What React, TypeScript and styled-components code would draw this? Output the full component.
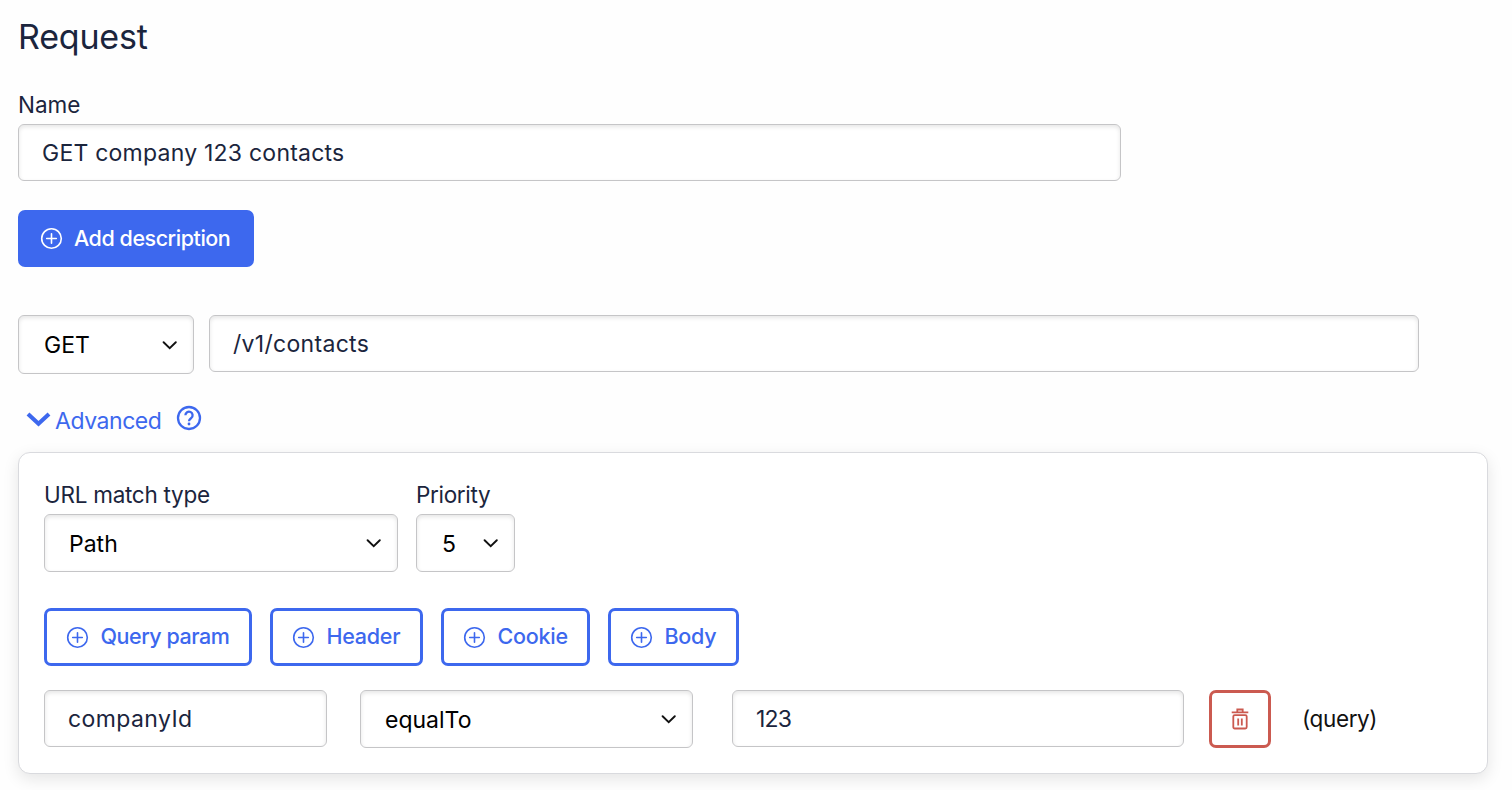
import React from 'react';
import styled, { createGlobalStyle } from 'styled-components';

const GlobalStyle = createGlobalStyle`
  * { box-sizing: border-box; }
  body {
    margin: 0;
    background: #fefefe;
    color: #1b253d;
    font-family: Inter, 'Liberation Sans', sans-serif;
    overflow: hidden;
  }
`;

const ink = '#1b253d';
const blue = '#3d68ee';
const red = '#cb5a50';

const Page = styled.main`
  display: flex;
  flex-direction: column;
  align-items: flex-start;
  width: 1512px;
  height: 790px;
  padding: 17px 0 0 18px;
`;

const Text = styled.span<{ $spacing?: number }>`
  display: block;
  white-space: nowrap;
  letter-spacing: ${(p) => p.$spacing ?? 0}px;
`;

const Title = styled.h1`
  margin: 0 0 33px;
  font-size: 34px;
  line-height: 40px;
  font-weight: 400;
  letter-spacing: -0.2px;
`;

const Label = styled.label<{ $spacing?: number }>`
  display: block;
  margin-bottom: 4px;
  font-size: 22.5px;
  line-height: 30px;
  white-space: nowrap;
  letter-spacing: ${(p) => p.$spacing ?? 0}px;
`;

const Field = styled.div<{ $width: number }>`
  display: flex;
  align-items: center;
  width: ${(p) => p.$width}px;
  height: 57px;
  padding: 0 23px;
  border: 1px solid #c5c5c7;
  border-radius: 6px;
  background: #fff;
  box-shadow: inset 0 2px 4px rgba(0, 0, 0, 0.1);
  color: ${ink};
  font-size: 23px;
  line-height: 30px;
`;

const SelectBox = styled(Field)<{ $height?: number; $indent?: number }>`
  justify-content: space-between;
  height: ${(p) => p.$height ?? 58}px;
  padding: 0 16px 0 ${(p) => p.$indent ?? 24}px;
  color: #000;
`;

const SelectValue = styled(Text)<{ $drop?: boolean }>`
  padding-top: ${(p) => (p.$drop ? 2 : 0)}px;
`;

const Button = styled.button<{ $width: number; $primary?: boolean }>`
  display: flex;
  align-items: center;
  gap: ${(p) => (p.$primary ? 11 : 12)}px;
  width: ${(p) => p.$width}px;
  height: ${(p) => (p.$primary ? 57 : 58)}px;
  padding: 0 0 0 ${(p) => (p.$primary ? 19 : 18.5)}px;
  border: 3px solid ${blue};
  border-radius: 7px;
  background: ${(p) => (p.$primary ? blue : '#fff')};
  color: ${(p) => (p.$primary ? '#fff' : blue)};
  font: 500 21.5px/28px Inter, 'Liberation Sans', sans-serif;
`;

const ButtonText = styled(Text)`
  padding-bottom: 2px;
`;

const DeleteButton = styled(Button)`
  justify-content: center;
  padding: 0;
  border-color: ${red};
  color: ${red};
`;

const AddRow = styled.div`
  margin: 29px 0 48px;
`;

const UrlRow = styled.div`
  display: flex;
  align-items: flex-start;
  gap: 15px;
`;

const AdvancedToggle = styled.div`
  display: flex;
  align-items: center;
  height: 30px;
  margin: 31px 0 17px 8px;
  color: ${blue};
  font-size: 23px;
  line-height: 30px;
`;

const AdvancedLabel = styled(Text)`
  width: 105px;
  margin: 1px 16px 0 4px;
`;

const HelpIcon = styled.svg`
  margin-top: -4px;
`;

const Panel = styled.section`
  display: flex;
  flex-direction: column;
  width: 1470px;
  height: 322px;
  padding: 27px 25px 0;
  border: 1px solid #d9dade;
  border-radius: 12px;
  background: #fff;
  box-shadow: 0 5px 16px rgba(0, 0, 0, 0.1);
`;

const MatchRow = styled.div`
  display: flex;
  gap: 18px;
`;

const ButtonRow = styled.div`
  display: flex;
  gap: 18px;
  margin: 36px 0 24px;
`;

const ConditionRow = styled.div`
  display: grid;
  grid-template-columns: 316px 372px 477px 93px auto;
  justify-content: start;
  align-items: start;
`;

const Kind = styled(Text)`
  color: #111;
  font-size: 22.5px;
  line-height: 57px;
`;

const PlusCircle = () => (
  <svg width="23" height="23" viewBox="0 0 23 23" fill="none" stroke="currentColor" strokeWidth="1.6">
    <circle cx="11.5" cy="11.5" r="9.8" />
    <path d="M11.5 6.7v9.6M6.7 11.5h9.6" strokeLinecap="round" />
  </svg>
);

const Chevron = () => (
  <svg width="15" height="10" viewBox="0 0 15 10" fill="none" stroke="#111" strokeWidth="1.9">
    <path d="M1.6 2.2l6.1 5.9 6.1-5.9" strokeLinecap="round" />
  </svg>
);

const BoldChevron = () => (
  <svg width="25" height="16" viewBox="0 0 25 16" fill="none" stroke="currentColor" strokeWidth="4.1">
    <path d="M2 1.9l10.5 9.8L23 1.9" />
  </svg>
);

const Trash = () => (
  <svg width="18" height="22" viewBox="0 0 18 22" fill="none" stroke="currentColor" strokeWidth="1.8">
    <path d="M.7 4.3h16.6M6.3 4.2V1.5h5.4v2.7" />
    <rect x="2.3" y="7.1" width="13.4" height="13.4" rx="1.4" />
    <path d="M7.2 10.5v7M10.8 10.5v7" />
  </svg>
);

const AddButton = ({ label, width, spacing, primary }: { label: string; width: number; spacing: number; primary?: boolean }) => (
  <Button $width={width} $primary={primary}>
    <PlusCircle />
    <ButtonText $spacing={spacing}>{label}</ButtonText>
  </Button>
);

type SelectProps = { value: string; width: number; height?: number; indent?: number; drop?: boolean };

const Select = ({ value, width, height, indent, drop }: SelectProps) => (
  <SelectBox $width={width} $height={height} $indent={indent}>
    <SelectValue $drop={drop}>{value}</SelectValue>
    <Chevron />
  </SelectBox>
);

export default function App() {
  return (
    <>
      <GlobalStyle />
      <Page>
        <Title>Request</Title>
        <Label>Name</Label>
        <Field $width={1103}><Text $spacing={0.23}>GET company 123 contacts</Text></Field>
        <AddRow>
          <AddButton primary label="Add description" width={236} spacing={-0.46} />
        </AddRow>
        <UrlRow>
          <Select value="GET" width={176} height={59} indent={25} />
          <Field $width={1210}><Text $spacing={0.3}>/v1/contacts</Text></Field>
        </UrlRow>
        <AdvancedToggle>
          <BoldChevron />
          <AdvancedLabel $spacing={-0.45}>Advanced</AdvancedLabel>
          <HelpIcon width="26" height="26" viewBox="0 0 26 26" fill="none" stroke="currentColor" strokeWidth="2.3">
            <circle cx="13" cy="13" r="11" />
            <path d="M9.4 10.3a3.6 3.6 0 1 1 5.8 2.8c-1.3 1-2.2 1.6-2.2 3.1" />
            <circle cx="13" cy="19" r="1.4" fill="currentColor" stroke="none" />
          </HelpIcon>
        </AdvancedToggle>
        <Panel>
          <MatchRow>
            <div>
              <Label $spacing={-0.27}>URL match type</Label>
              <Select value="Path" width={354} drop />
            </div>
            <div>
              <Label $spacing={-0.33}>Priority</Label>
              <Select value="5" width={99} indent={25} drop />
            </div>
          </MatchRow>
          <ButtonRow>
            <AddButton label="Query param" width={208} spacing={-0.47} />
            <AddButton label="Header" width={153} spacing={-0.25} />
            <AddButton label="Cookie" width={149} spacing={-0.25} />
            <AddButton label="Body" width={131} spacing={-0.3} />
          </ButtonRow>
          <ConditionRow>
            <Field $width={283}><Text $spacing={0.4}>companyId</Text></Field>
            <Select value="equalTo" width={333} drop />
            <Field $width={452}><Text $spacing={-0.8}>123</Text></Field>
            <DeleteButton $width={62} aria-label="Delete condition"><Trash /></DeleteButton>
            <Kind $spacing={-0.38}>(query)</Kind>
          </ConditionRow>
        </Panel>
      </Page>
    </>
  );
}
